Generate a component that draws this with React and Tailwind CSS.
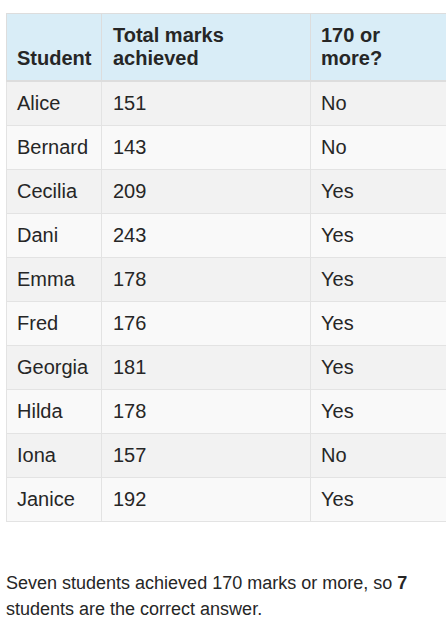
const rows = [
  ['Alice', 151, 'No'],
  ['Bernard', 143, 'No'],
  ['Cecilia', 209, 'Yes'],
  ['Dani', 243, 'Yes'],
  ['Emma', 178, 'Yes'],
  ['Fred', 176, 'Yes'],
  ['Georgia', 181, 'Yes'],
  ['Hilda', 178, 'Yes'],
  ['Iona', 157, 'No'],
  ['Janice', 192, 'Yes'],
];

export default function App() {
  return (
    <div
      className="w-[446px] h-[621px] overflow-hidden bg-white text-[#262626]"
      style={{ fontFamily: '"Liberation Sans", Arial, sans-serif' }}
    >
      <div className="pl-[6px] pt-[13px]">
        <table className="w-[442px] border-collapse table-fixed text-[20px] leading-[23px]">
          <colgroup>
            <col className="w-[95px]" />
            <col className="w-[209px]" />
            <col />
          </colgroup>
          <thead>
            <tr className="bg-[#d9edf7]">
              <th className="border border-[#dddddd] border-b-2 px-[10px] pt-[10px] pb-[10px] text-left align-bottom font-bold">
                Student
              </th>
              <th className="border border-[#dddddd] border-b-2 px-[11px] pt-[10px] pb-[10px] text-left align-bottom font-bold">
                Total marks achieved
              </th>
              <th className="border border-[#dddddd] border-b-2 px-[10px] pt-[10px] pb-[10px] text-left align-bottom font-bold">
                170 or more?
              </th>
            </tr>
          </thead>
          <tbody>
            {rows.map(([name, marks, ok], i) => (
              <tr key={name} className={i % 2 === 0 ? 'bg-[#f2f2f2]' : 'bg-[#f9f9f9]'}>
                <td className="border border-[#e3e3e3] px-[10px] py-[10px]">{name}</td>
                <td className="border border-[#e3e3e3] px-[11px] py-[10px]">{marks}</td>
                <td className="border border-[#e3e3e3] px-[10px] py-[10px]">{ok}</td>
              </tr>
            ))}
          </tbody>
        </table>
        <p className="mt-[48px] text-[18px] leading-[26px] pr-[4px]">
          Seven students achieved 170 marks or more, so <strong>7</strong> students are the correct answer.
        </p>
      </div>
    </div>
  );
}
